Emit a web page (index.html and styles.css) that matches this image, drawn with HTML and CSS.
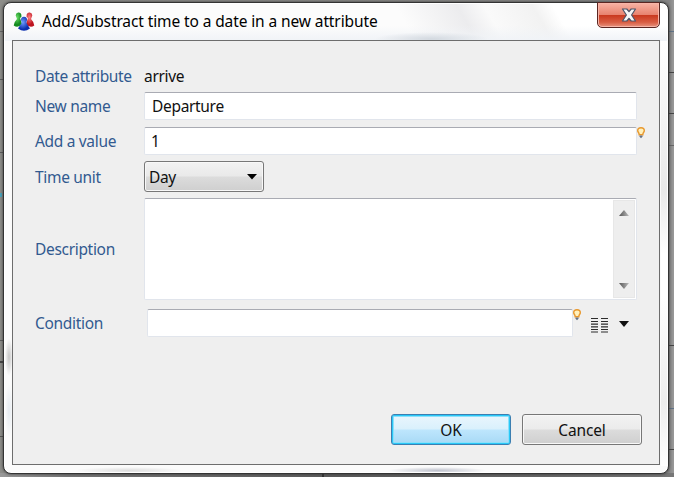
FILE: index.html
```html
<!DOCTYPE html>
<html lang="en">
<head>
<meta charset="utf-8">
<title>Add/Substract time to a date in a new attribute</title>
<link rel="stylesheet" href="styles.css">
</head>
<body>
<main class="window">
  <header class="titlebar">
    <svg class="app-icon" width="22" height="20" viewBox="0 0 22 20">
      <defs>
        <radialGradient id="g" cx=".4" cy=".35"><stop offset="0" stop-color="#6de068"/><stop offset="1" stop-color="#158a20"/></radialGradient>
        <radialGradient id="r" cx=".4" cy=".35"><stop offset="0" stop-color="#ff8585"/><stop offset="1" stop-color="#bd1420"/></radialGradient>
        <radialGradient id="b" cx=".4" cy=".4"><stop offset="0" stop-color="#6f9dff"/><stop offset="1" stop-color="#0c2fae"/></radialGradient>
      </defs>
      <path fill="url(#g)" d="M2.700 3.500a2.900 2.900 0 1 1 4.300 2.500L9 12Q5 16.500 .7 13.500 1 10 4 7Z"/>
      <path fill="url(#r)" d="M19.300 3.500a2.900 2.900 0 1 0-4.300 2.500L13 12q4 4.500 8.300 1.500Q21 10 18 7Z"/>
      <path fill="url(#b)" d="M8.300 9a3 3 0 1 1 5.400 0l-.3 2 3.600 5.500q-6 4.500-12 0l3.600-5.500Z"/>
    </svg>
    <h1 class="title">Add/Substract time to a date in a new attribute</h1>
    <button class="close" aria-label="Close">
      <svg width="16" height="14" viewBox="0 0 16 14"><path d="M1.500 1h4.300L8 3.700 10.200 1h4.300L10.600 7l3.900 6h-4.300L8 10.300 5.800 13H1.500l3.900-6Z" fill="#f6f6f6" stroke="#4d5468" stroke-width="1.200" stroke-linejoin="round"/></svg>
    </button>
  </header>
  <form class="client">
    <div class="row row-date"><span class="label l-date">Date attribute</span><span class="plain">arrive</span></div>
    <div class="row row-name"><span class="label">New name</span><div class="field wide name">Departure</div></div>
    <div class="row row-value"><span class="label">Add a value</span><div class="field wide">1</div>
      <svg class="bulb" width="8" height="12" viewBox="0 0 8 12"><path d="M4 .7C1.600.7.700 2.200.700 3.700c0 1.300 1.500 2 1.500 4h3.600c0-2 1.500-2.700 1.500-4C7.300 2.200 6.400.700 4 .700Z" fill="#fff1bd" stroke="#e8982e" stroke-width="1.400"/><path d="M2.500 8.500h3v1.300L4 11.300 2.500 9.800Z" fill="#667387"/></svg>
    </div>
    <div class="row row-unit"><span class="label">Time unit</span><div class="select"><span>Day</span><svg width="10" height="6"><path d="M0 0h10L5 5.500Z" fill="#000"/></svg></div></div>
    <div class="row row-desc"><span class="label">Description</span>
      <div class="field area"><div class="scroll">
        <svg width="10" height="6"><defs><linearGradient id="a"><stop stop-color="#555"/><stop offset="1" stop-color="#bbb"/></linearGradient></defs><path d="M0 6h10L5 0Z" fill="url(#a)"/></svg>
        <svg width="10" height="6"><path d="M0 0h10L5 6Z" fill="url(#a)"/></svg>
      </div></div>
    </div>
    <div class="row row-cond"><span class="label">Condition</span><div class="field cond"></div>
      <svg class="bulb" width="8" height="12" viewBox="0 0 8 12"><path d="M4 .7C1.600.7.700 2.200.700 3.700c0 1.300 1.500 2 1.500 4h3.600c0-2 1.500-2.700 1.500-4C7.300 2.200 6.400.700 4 .700Z" fill="#fff1bd" stroke="#e8982e" stroke-width="1.400"/><path d="M2.500 8.500h3v1.300L4 11.300 2.500 9.800Z" fill="#667387"/></svg>
      <svg class="columns" width="17" height="16" viewBox="0 0 17 16"><path d="M0 1.500h7M10 1.500h7M0 4.500h7M10 4.500h7M0 7.200h7M10 7.200h7M0 9.900h7M10 9.900h7M0 12.500h7M10 12.500h7M0 15h7M10 15h7" stroke="#2c2c2c" stroke-width="1.200"/></svg>
      <svg class="arrow" width="10" height="6"><path d="M0 0h10L5 6Z" fill="#111"/></svg>
    </div>
    <footer class="actions"><button type="button" class="btn ok">OK</button><button type="button" class="btn cancel">Cancel</button></footer>
  </form>
</main>
</body>
</html>
```
FILE: styles.css
```css
* { box-sizing: border-box; }
body {
  margin: 0;
  width: 674px;
  height: 477px;
  padding: 2px 5px 3px 3px;
  overflow: hidden;
  background:
    linear-gradient(#646464, #646464) 0 31px / 4px 1px no-repeat,
    linear-gradient(#5c5c5c, #5c5c5c) 0 79px / 4px 1px no-repeat,
    linear-gradient(#5c5c5c, #5c5c5c) 0 152px / 4px 1px no-repeat,
    linear-gradient(#49a5bd, #49a5bd) 0 193px / 2px 4px no-repeat,
    linear-gradient(#5c5c5c, #5c5c5c) 0 340px / 4px 1px no-repeat,
    linear-gradient(#444, #444) 0 361px / 4px 2px no-repeat,
    linear-gradient(#555, #555) 0 436px / 4px 1px no-repeat,
    linear-gradient(#5e7186, #5e7186) 669px 31px / 5px 1px no-repeat,
    linear-gradient(#444, #444) 669px 72px / 5px 1px no-repeat,
    linear-gradient(#444, #444) 669px 113px / 5px 1px no-repeat,
    linear-gradient(#666, #666) 669px 145px / 5px 1px no-repeat,
    linear-gradient(#444, #444) 669px 345px / 5px 1px no-repeat,
    linear-gradient(#5e7186, #5e7186) 669px 408px / 5px 1px no-repeat,
    linear-gradient(#444, #444) 669px 449px / 5px 1px no-repeat,
    linear-gradient(#333, #333) 322px 473px / 2px 4px no-repeat,
    linear-gradient(90deg, #999 0, #777 10%, #5b5b5b 50%, #666 80%, #777 100%) 0 473px / 674px 4px no-repeat,
    linear-gradient(90deg, #8d8d89 0 3px, #858585 669px, #999 674px);
  font-family: "Noto Sans", "Open Sans", sans-serif;
  font-size: 15.5px;
  letter-spacing: -.32px;
  color: #111;
}
.window {
  width: 666px;
  height: 472px;
  padding: 0 8px;
  border: 1px solid #333;
  border-radius: 8px;
  box-shadow: inset 0 0 0 1px #fff, 0 0 3px #333;
  background:
    radial-gradient(ellipse at center, #bfc2cd 0, transparent 70%) 383px 464px / 100px 7px no-repeat,
    radial-gradient(ellipse at center, #dedede 0, transparent 70%) 70px 464px / 110px 7px no-repeat,
    radial-gradient(ellipse at center, #c6c6c6 0, transparent 70%) 1px 335px / 8px 38px no-repeat,
    radial-gradient(ellipse at center, #e4eaf0 0, transparent 70%) 1px 380px / 8px 55px no-repeat,
    linear-gradient(#fff 0, #e9e9e9 35%, #fff 50%, #fff 60%, #ededed 85%, #fff) 657px 38px / 7px 425px no-repeat,
    radial-gradient(ellipse at center, #d3d9e0 0, transparent 70%) 370px 29px / 115px 14px no-repeat,
    linear-gradient(transparent 60%, #f0f3f7) 0 0 / 100% 38px no-repeat,
    linear-gradient(60deg, #fcfcfc 60%, #ececee 69%, #fafafa 73%, #f2f2f2 80%, #fff 83%) 0 0 / 100% 38px no-repeat,
    #fbfbfb;
}
.titlebar { display: flex; height: 37px; align-items: center; }
.app-icon { margin: 0 7px 0 1px; }
.title {
  margin: -1px 0 0;
  font-size: 15.5px;
  font-weight: 400;
  letter-spacing: -.11px;
  white-space: nowrap;
  color: #000;
}
.close {
  display: flex;
  align-self: flex-start;
  align-items: center;
  justify-content: center;
  width: 63px;
  height: 26px;
  margin: -1px 0 0 auto;
  padding: 0 0 1px;
  border: 1px solid #5b2622;
  border-radius: 0 0 5px 5px;
  box-shadow: inset 0 0 0 1px #f7b5a8;
  background: linear-gradient(#f9b3a5 0, #e7836f 49%, #c9391f 51%, #d95d43 80%, #e79480);
}
.client {
  display: flex;
  flex-direction: column;
  width: 648px;
  height: 425px;
  margin: 0;
  padding: 23px 17px 0 22px;
  border: 1px solid #6d6d6d;
  background: #efefef;
}
.row { display: flex; align-items: center; }
.label {
  width: 109px;
  flex: none;
  color: #325a90;
  white-space: nowrap;
}
.l-date { letter-spacing: -.4px; }
.row-date { height: 24px; margin-bottom: 4px; }
.row-name { height: 28px; margin-bottom: 7px; }
.row-value { height: 28px; margin-bottom: 6px; }
.row-unit { height: 31px; margin-bottom: 6px; }
.row-desc { height: 102px; margin-bottom: 9px; }
.row-cond { height: 28px; }
.field {
  flex: none;
  border: 1px solid #e1e5ec;
  border-top-color: #a9abb3;
  border-radius: 2px;
  background: #fff;
  height: 28px;
  padding: 0 6px;
  line-height: 27px;
}
.wide { width: 493px; }
.name { padding-left: 7px; }
.area { width: 493px; height: 102px; padding: 1px; display: flex; justify-content: flex-end; }
.scroll {
  width: 22px;
  padding: 9px 0 8px;
  display: flex;
  flex-direction: column;
  align-items: center;
  justify-content: space-between;
  background: #eee;
  border: 1px solid #e7e7e7;
}
.bulb { align-self: flex-start; margin-left: 0; flex: none; }
.select {
  display: flex;
  align-items: center;
  justify-content: space-between;
  width: 120px;
  height: 31px;
  padding: 0 6px 0 4px;
  border: 1px solid #777;
  border-radius: 3px;
  box-shadow: inset 0 0 0 1px #f8f8f8;
  background: linear-gradient(#f2f2f2, #e9e9e9 49%, #dcdcdc 51%, #cfcfcf);
}
.cond { width: 426px; margin-left: 3px; }
.columns { margin: 3px 0 0 10px; }
.arrow { margin: 2px 0 0 11px; }
.actions { display: flex; justify-content: flex-end; gap: 11px; margin-top: 77px; }
.btn {
  width: 120px;
  height: 31px;
  padding: 0;
  border: 1px solid #777;
  border-radius: 3px;
  box-shadow: inset 0 0 0 1px #f8f8f8;
  background: linear-gradient(#f2f2f2, #ebebeb 49%, #dcdcdc 51%, #cfcfcf);
  font: inherit;
  letter-spacing: -.15px;
  color: #111;
}
.ok {
  border-color: #3c7fb1;
  box-shadow: inset 0 0 0 1px #29c8f8, inset 0 0 0 2px #8de0fa;
  background: linear-gradient(#eaf6fd, #d9f0fc 49%, #bee6fd 51%, #a7d9f5);
}
```
